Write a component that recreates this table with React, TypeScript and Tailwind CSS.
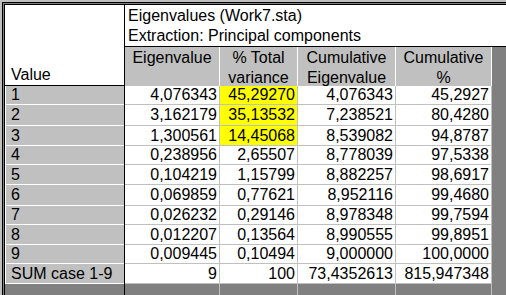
const COLS = ["w-[95px]", "w-[78px]", "w-[98px]", "w-[96px]"];

const ROWS = [
  { label: "1", h: "h-[19px]", v: ["4,076343", "45,29270", "4,076343", "45,2927"], hl: true },
  { label: "2", h: "h-[21px]", v: ["3,162179", "35,13532", "7,238521", "80,4280"], hl: true },
  { label: "3", h: "h-[20px]", v: ["1,300561", "14,45068", "8,539082", "94,8787"], hl: true },
  { label: "4", h: "h-[19px]", v: ["0,238956", "2,65507", "8,778039", "97,5338"], hl: false },
  { label: "5", h: "h-[20px]", v: ["0,104219", "1,15799", "8,882257", "98,6917"], hl: false },
  { label: "6", h: "h-[21px]", v: ["0,069859", "0,77621", "8,952116", "99,4680"], hl: false },
  { label: "7", h: "h-[19px]", v: ["0,026232", "0,29146", "8,978348", "99,7594"], hl: false },
  { label: "8", h: "h-[20px]", v: ["0,012207", "0,13564", "8,990555", "99,8951"], hl: false },
  { label: "9", h: "h-[19px]", v: ["0,009445", "0,10494", "9,000000", "100,0000"], hl: false },
  { label: "SUM case 1-9", h: "h-[20px]", v: ["9", "100", "73,4352613", "815,947348"], hl: false },
];

const HEADERS = [
  ["Eigenvalue", ""],
  ["% Total", "variance"],
  ["Cumulative", "Eigenvalue"],
  ["Cumulative", "%"],
];

export default function App() {
  return (
    <div className="w-[506px] h-[295px] overflow-hidden bg-[#c0c0c0] pl-[2px] pt-[2px] text-[16px] text-black font-['Liberation_Sans',Arial,sans-serif]">
      {/* double frame */}
      <div className="h-full border-l border-t border-black">
        <div className="h-full border-l border-t border-[#808080]">
          <div className="h-full border-l border-t border-black bg-white flex flex-col">
            {/* header block */}
            <div className="flex h-[81px] border-b border-black">
              <div className="w-[120px] border-r border-black flex items-end pl-[6px] leading-[20px]">
                Value
              </div>
              <div className="flex-1 flex flex-col">
                <div className="h-[42px] border-b border-black pl-[3px] pt-[1px] leading-[20px] whitespace-nowrap">
                  <div>Eigenvalues (Work7.sta)</div>
                  <div>Extraction: Principal components</div>
                </div>
                <div className="flex flex-1">
                  {HEADERS.map((hd, i) => (
                    <div
                      key={i}
                      className={`${COLS[i]} bg-[#c0c0c0] border-r border-white pt-[1px] leading-[20px] text-center whitespace-nowrap`}
                    >
                      <div>{hd[0]}</div>
                      <div>{hd[1]}</div>
                    </div>
                  ))}
                  <div className="flex-1 bg-[#808080]" />
                </div>
              </div>
            </div>

            {/* data rows */}
            {ROWS.map((r) => (
              <div key={r.label} className={`flex ${r.h}`}>
                <div className="w-[120px] border-r border-black">
                  <div className="h-full bg-[#c0c0c0] border-l border-b border-white pl-[5px] flex items-center whitespace-nowrap">
                    {r.label}
                  </div>
                </div>
                {r.v.map((val, i) => (
                  <div
                    key={i}
                    className={`${COLS[i]} border-r border-b border-[#c0c0c0] pr-[2px] flex items-center justify-end ${
                      r.hl && i === 1 ? "bg-[#ffff00]" : "bg-white"
                    }`}
                  >
                    {val}
                  </div>
                ))}
                <div className="flex-1 bg-[#808080]" />
              </div>
            ))}

            {/* trailing empty row */}
            <div className="flex flex-1 bg-[#808080]">
              <div className="w-[120px] border-r border-black" />
              {COLS.map((w, i) => (
                <div key={i} className={`${w} border-r border-[#c0c0c0]`} />
              ))}
              <div className="flex-1" />
            </div>
          </div>
        </div>
      </div>
    </div>
  );
}
